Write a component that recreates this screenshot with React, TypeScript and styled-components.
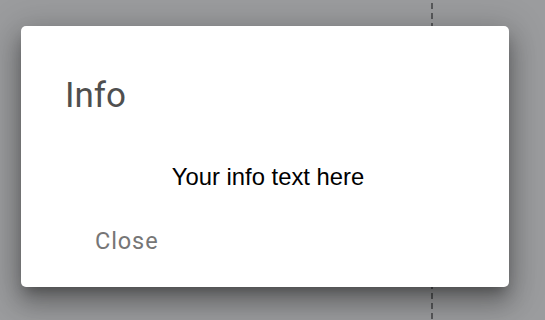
import React from "react";
import styled, { createGlobalStyle } from "styled-components";

const Global = createGlobalStyle`
  html, body {
    margin: 0;
    padding: 0;
    width: 545px;
    height: 320px;
    overflow: hidden;
    background: #9b9c9e;
  }
  #root { width: 545px; height: 320px; }
`;

const Page = styled.div`
  box-sizing: border-box;
  width: 545px;
  height: 320px;
  display: flex;
  align-items: stretch;
  padding: 26px 36px 33px 21px;
  background-color: #9b9c9e;
  background-image: repeating-linear-gradient(
    to bottom,
    #58595b 0px,
    #58595b 6px,
    transparent 6px,
    transparent 10px
  );
  background-size: 2px 100%;
  background-position: 431px 3px;
  background-repeat: no-repeat;
`;

const Dialog = styled.div`
  flex: 1;
  display: flex;
  flex-direction: column;
  background: #ffffff;
  border-radius: 5px;
  box-shadow: 0 16px 24px 2px rgba(0, 0, 0, 0.22),
    0 6px 34px 6px rgba(0, 0, 0, 0.18), 0 8px 12px -5px rgba(0, 0, 0, 0.3);
  padding: 50px 44px 0 44px;
`;

const Title = styled.h2`
  margin: 0;
  font-family: Roboto, "Noto Sans", sans-serif;
  font-weight: 400;
  font-size: 35px;
  line-height: 40px;
  color: #4f4f4f;
`;

const Content = styled.p`
  margin: 48px 0 0 6px;
  font-family: "Liberation Sans", Arial, sans-serif;
  font-size: 23.8px;
  line-height: 26px;
  color: #000;
  text-align: center;
`;

const Actions = styled.div`
  display: flex;
  margin-top: 37px;
  padding-left: 30px;
`;

const TextButton = styled.button`
  border: none;
  background: transparent;
  padding: 0;
  font-family: Roboto, "Noto Sans", sans-serif;
  font-weight: 400;
  font-size: 23.5px;
  line-height: 28px;
  letter-spacing: 0.9px;
  color: #767676;
  cursor: pointer;
`;

export default function App() {
  return (
    <>
      <Global />
      <Page>
        <Dialog>
          <Title>Info</Title>
          <Content>Your info text here</Content>
          <Actions>
            <TextButton>Close</TextButton>
          </Actions>
        </Dialog>
      </Page>
    </>
  );
}
